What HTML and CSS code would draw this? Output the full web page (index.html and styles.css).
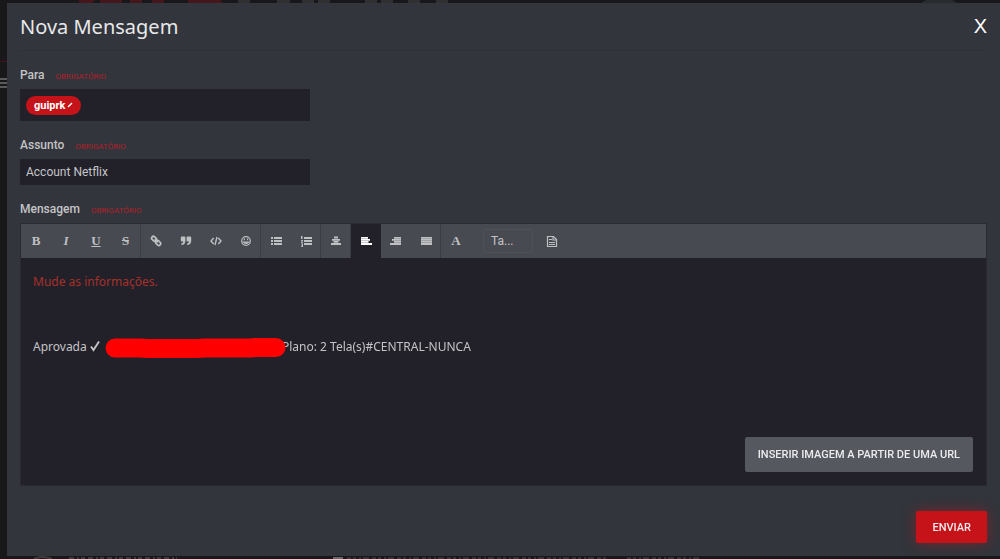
FILE: index.html
```html
<!DOCTYPE html>
<html lang="pt-BR">
<head>
    <meta charset="utf-8">
    <meta name="viewport" content="width=device-width, initial-scale=1">
    <title>Nova Mensagem</title>
    <link rel="stylesheet" href="styles.css">
</head>
<body>
    <!-- page under the dialog, only its edges show -->
    <div class="backdrop" aria-hidden="true">
        <svg class="backdrop-top" width="1000" height="100">
            <path fill="#45161b" d="M79 0h16l-3 3H79zM100 0h22v3h-22zM130 0h12v3h-12zM152 0h12v3h-12zM188 0h32l3 3h-35z"/>
            <path fill="#303030" d="M238 0h12v3h-12zM277 0h13v3h-13zM302 0h12v3h-12zM318 0h12v3h-12zM365 0h12v3h-12zM381 0h12v3h-12zM408 0h12v3h-12zM436 0h12v3h-12z"/>
            <path fill="#282b2e" d="M921 3q8-6 18-6t18 6z"/>
            <path fill="#4a1216" d="M0 61h7v1H0z"/>
            <path fill="#5a5a5a" d="M0 78h7v2H0zM0 82h7v2H0zM0 86h7v2H0z"/>
        </svg>
        <svg class="backdrop-bottom" width="1000" height="3">
            <path stroke="#3c3c3e" stroke-width="2" fill="none" d="M34 3q8-4 18 0"/>
            <path stroke="#3c3c3e" stroke-width="2" stroke-dasharray="5 3 2 2 4 3" d="M69 2h108"/>
            <path stroke="#656a6e" stroke-width="2" d="M333 2h10"/>
            <path stroke="#343436" stroke-width="2" stroke-dasharray="4 2 3 3 2 2 6 3" d="M347 2h262M627 2h73"/>
        </svg>
    </div>

    <form class="modal" role="dialog" aria-labelledby="title">
        <div class="modal-header">
            <h1 id="title">Nova Mensagem</h1>
            <button type="button" class="close" aria-label="X">X</button>
        </div>

        <div class="modal-body">
            <div class="field">
                <div class="label-row">
                    <label for="to">Para</label>
                    <span class="required">OBRIGATÓRIO</span>
                </div>
                <div class="token-box">
                    <button type="button" class="token">guiprk
                        <svg width="6" height="6" viewBox="0 0 6 6"><path d="M1 5L5 1" stroke="#fff" stroke-width="1.4"/></svg>
                    </button>
                    <input type="text" id="to" class="token-input">
                </div>
            </div>

            <div class="field">
                <div class="label-row">
                    <label for="subject">Assunto</label>
                    <span class="required">OBRIGATÓRIO</span>
                </div>
                <input type="text" id="subject" class="text-input" value="Account Netflix">
            </div>

            <div class="field">
                <div class="label-row">
                    <span id="message-label" class="label">Mensagem</span>
                    <span class="required">OBRIGATÓRIO</span>
                </div>
                <div class="editor">
                    <div class="toolbar">
                        <div class="group">
                            <button type="button" class="tool serif" aria-label="Negrito"><b>B</b></button>
                            <button type="button" class="tool serif" aria-label="Itálico"><i>I</i></button>
                            <button type="button" class="tool serif" aria-label="Sublinhado"><u>U</u></button>
                            <button type="button" class="tool serif" aria-label="Tachado"><s>S</s></button>
                        </div>
                        <div class="group">
                            <button type="button" class="tool" aria-label="Link">
                                <svg width="12" height="12" viewBox="0 0 12 12" fill="none" stroke="currentColor" stroke-width="1.7"><rect x="1.4" y="2" width="5.4" height="3.6" rx="1.7" transform="rotate(42 4.1 3.8)"/><rect x="5.5" y="6.2" width="5.4" height="3.6" rx="1.7" transform="rotate(42 8.2 8)"/><path d="M4.6 4.3l3.1 3"/></svg>
                            </button>
                            <button type="button" class="tool" aria-label="Citação">
                                <svg width="12" height="12" viewBox="0 0 12 12" fill="currentColor"><path d="M1.8 1.5h2.6q1 0 1 1v3.2q0 4.1-4 4.3V8.4q1.9-.1 1.9-1.9H1.8q-1 0-1-1v-3q0-1 1-1zM7.6 1.5h2.6q1 0 1 1v3.2q0 4.1-4 4.3V8.4q1.9-.1 1.9-1.9H7.6q-1 0-1-1v-3q0-1 1-1z"/></svg>
                            </button>
                            <button type="button" class="tool" aria-label="Código">
                                <svg width="12" height="12" viewBox="0 0 12 12" fill="none" stroke="currentColor" stroke-width="1.4"><path d="M3.7 3L1 6l2.7 3M8.3 3L11 6 8.3 9M7 2L5 10"/></svg>
                            </button>
                            <button type="button" class="tool" aria-label="Emoji">
                                <svg width="12" height="12" viewBox="0 0 12 12" fill="none" stroke="currentColor" stroke-width="1.2"><circle cx="6" cy="6" r="4.3"/><path d="M3.5 7q2.5 2.8 5 0z"/><path d="M4.4 3.6v1.6M7.6 3.6v1.6"/></svg>
                            </button>
                        </div>
                        <div class="group">
                            <button type="button" class="tool" aria-label="Lista">
                                <svg width="12" height="12" viewBox="0 0 12 12" fill="currentColor"><path d="M1 2h2v2H1zM1 5h2v2H1zM1 8h2v2H1zM4 2h8v2H4zM4 5h8v2H4zM4 8h8v2H4z"/></svg>
                            </button>
                            <button type="button" class="tool" aria-label="Lista numerada">
                                <svg width="12" height="12" viewBox="0 0 12 12" fill="currentColor"><path d="M1 1h1.5v3H1zM1 5h2v1L2 7h1v.7H1V7l1-1.3H1zM1 8.5h2V12H1v-.8h1v-.6H1V10h1v-.7H1zM4 2h8v2H4zM4 5h8v2H4zM4 8h8v2H4z"/></svg>
                            </button>
                        </div>
                        <div class="group">
                            <button type="button" class="tool" aria-label="Centralizar">
                                <svg width="12" height="12" viewBox="0 0 12 12" fill="currentColor"><path d="M4 1.5h4v2H4zM2 4h8v1.7H2zM3.5 6h5v1.7h-5zM1 8h10v2H1z"/></svg>
                            </button>
                        </div>
                        <button type="button" class="tool active" aria-label="Alinhar à esquerda" aria-pressed="true">
                            <svg width="12" height="12" viewBox="0 0 12 12" fill="currentColor"><path d="M1 2h7v1.8H1zM1 4h9v1.8H1zM1 6h7.5v1.8H1zM1 8h11v2H1z"/></svg>
                        </button>
                        <div class="group">
                            <button type="button" class="tool" aria-label="Alinhar à direita">
                                <svg width="12" height="12" viewBox="0 0 12 12" fill="currentColor"><path d="M4 2h7v1.8H4zM2 4h9v1.8H2zM4 6h7v1.8H4zM0 8h11v2H0z"/></svg>
                            </button>
                            <button type="button" class="tool" aria-label="Justificar">
                                <svg width="12" height="12" viewBox="0 0 12 12" fill="currentColor"><path d="M1 2h11v1.8H1zM1 4h11v1.8H1zM1 6h11v1.8H1zM1 8h11v2H1z"/></svg>
                            </button>
                        </div>
                        <button type="button" class="tool serif" aria-label="Cor do texto"><b>A</b></button>
                        <select class="size" aria-label="Tamanho">
                            <option>Ta...</option>
                        </select>
                        <button type="button" class="tool" aria-label="Visualizar">
                            <svg width="12" height="12" viewBox="0 0 12 12" fill="none" stroke="currentColor"><path d="M1.5 1.5h6l3 3v7h-9z" stroke-width="1.2"/><path d="M7 1.5V5h3.5M3 4.5h3M3 9.500h6M3 7.500h6" stroke-width="1.1"/></svg>
                        </button>
                    </div>
                    <div class="message" contenteditable="true" role="textbox" aria-multiline="true" aria-labelledby="message-label">
                        <p class="notice">Mude as informações.</p>
                        <p>Aprovada <svg class="check" width="10" height="12" viewBox="0 0 10 12"><path d="M1 6.5l2.5 3.5L9 1.5" fill="none" stroke="currentColor" stroke-width="1.9"/></svg> <svg class="marker" width="181" height="22" viewBox="0 0 181 22"><path fill="none" stroke="#f00" stroke-width="19" stroke-linecap="round" stroke-linejoin="round" d="M10 11h25l8 .5h49l8-.5h45l6-.5h20"/></svg>Plano: 2 Tela(s)#CENTRAL-NUNCA</p>
                    </div>
                    <div class="editor-footer">
                        <button type="button" class="btn btn-insert">INSERIR IMAGEM A PARTIR DE UMA URL</button>
                    </div>
                </div>
            </div>
        </div>

        <div class="modal-footer">
            <button type="submit" class="btn btn-send">ENVIAR</button>
        </div>
    </form>
</body>
</html>
```
FILE: styles.css
```css
* {
    box-sizing: border-box;
}

body {
    margin: 0;
    min-height: 100vh;
    display: flex;
    padding: 3px 0 3px 7px;
    background: #18181a;
    color: #c4c4c6;
    font-family: Roboto, sans-serif;
    font-size: 12px;
}

button,
input,
select {
    font: inherit;
    color: inherit;
    border: 0;
    margin: 0;
}

button {
    padding: 0;
    background: none;
    cursor: pointer;
}

.backdrop {
    position: fixed;
    inset: 0;
    z-index: -1;
    overflow: hidden;
}

.backdrop-top,
.backdrop-bottom {
    position: absolute;
    left: 0;
}

.backdrop-top {
    top: 0;
}

.backdrop-bottom {
    bottom: 0;
}

.modal {
    flex: 1;
    display: flex;
    flex-direction: column;
    padding: 0 13px;
    background: #32353c;
}

.modal-header {
    display: flex;
    align-items: center;
    justify-content: space-between;
    height: 48px;
    border-bottom: 1px solid #2d3038;
}

h1 {
    margin: 0;
    font-family: "Noto Sans", sans-serif;
    font-size: 20px;
    font-weight: 400;
    color: #e8e8ea;
}

.close {
    font-family: "Liberation Sans", sans-serif;
    font-size: 20px;
    color: #fff;
}

.modal-body {
    flex: 1;
    display: flex;
    flex-direction: column;
    gap: 16px;
    padding-top: 16px;
}

.field:last-child {
    flex: 1;
    display: flex;
    flex-direction: column;
}

.label-row {
    display: flex;
    align-items: center;
    gap: 11px;
    height: 16px;
    margin-bottom: 6px;
}

label,
.label {
    font-weight: 500;
}

.required {
    padding-top: 2px;
    font-size: 8px;
    color: #b31f29;
}

.token-box,
.text-input {
    width: 30%;
    min-width: 240px;
    padding: 0 6px;
    background: #22212a;
}

.token-box {
    display: flex;
    align-items: center;
    gap: 6px;
    height: 32px;
}

.token {
    display: flex;
    align-items: center;
    gap: 2px;
    height: 19px;
    padding: 0 8px;
    border-radius: 10px;
    background: #c61219;
    color: #fff;
    font-size: 11px;
    font-weight: 700;
}

.token-input {
    flex: 1;
    min-width: 0;
    background: none;
    outline: none;
}

.text-input {
    display: block;
    height: 26px;
}

.editor {
    flex: 1;
    display: flex;
    flex-direction: column;
    border: 1px solid #292a32;
    background: #22212a;
}

.toolbar {
    display: flex;
    align-items: center;
    height: 34px;
    background: #474a51;
}

.group {
    display: flex;
    border-right: 1px solid #3b3d44;
}

.tool {
    display: flex;
    align-items: center;
    justify-content: center;
    width: 30px;
    height: 34px;
    color: #bfc0c2;
}

.group .tool:last-child {
    width: 29px;
}

.serif {
    font-family: "Liberation Serif", serif;
    font-size: 13px;
    font-weight: 700;
}

.active {
    background: #22212a;
    color: #fff;
}

.size {
    appearance: none;
    width: 50px;
    height: 24px;
    margin: 0 4px 0 12px;
    padding: 0 7px;
    border: 1px solid #4f5158;
    border-radius: 2px;
    background: none;
}

.message {
    flex: 1;
    padding: 13px 12px;
    font-family: "Noto Sans", sans-serif;
    line-height: 22px;
    outline: none;
}

.message p {
    margin: 0 0 43px;
}

.message .notice {
    color: #a63029;
}

.check {
    vertical-align: -1px;
}

/* covers the start of the text that follows it */
.marker {
    position: relative;
    margin: 0 -4px 0 2px;
    vertical-align: middle;
}

.editor-footer {
    display: flex;
    justify-content: flex-end;
    padding: 13px;
}

.btn {
    border-radius: 2px;
    font-size: 11px;
    font-weight: 500;
    color: #ececee;
}

.btn-insert {
    height: 35px;
    padding: 0 13px;
    background: #565860;
}

.btn-send {
    height: 32px;
    padding: 0 16px;
    background: #c61219;
    box-shadow: 0 0 14px rgba(198, 18, 25, 0.5);
}

.modal-footer {
    display: flex;
    justify-content: flex-end;
    padding: 25px 0 13px;
}
```
